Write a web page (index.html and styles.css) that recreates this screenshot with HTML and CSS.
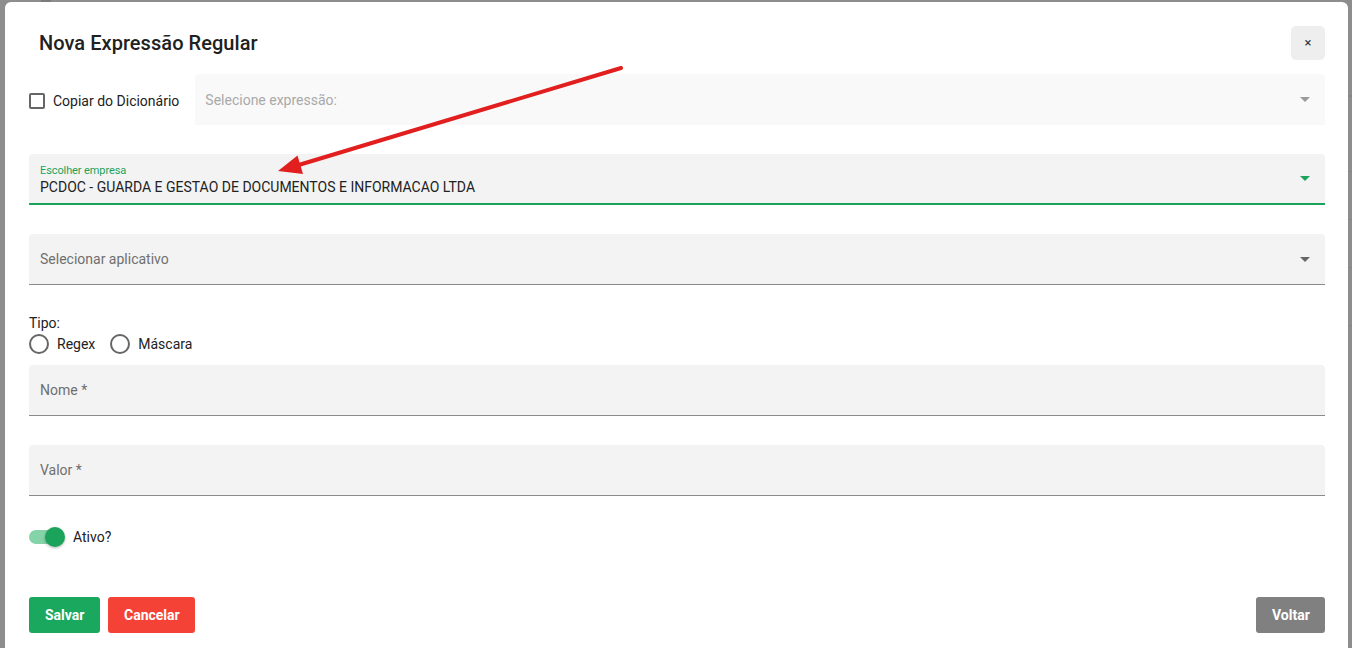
FILE: index.html
```html
<!DOCTYPE html>
<html lang="pt">
<head>
<meta charset="utf-8">
<title>Nova Expressão Regular</title>
<link rel="stylesheet" href="styles.css">
</head>
<body>
<div class="modal">
  <div class="modal-header">
    <h2 class="modal-title">Nova Expressão Regular</h2>
    <button class="close-btn" type="button">×</button>
  </div>

  <div class="row-copy">
    <label class="check">
      <span class="check-box"></span>
      <span class="check-label">Copiar do Dicionário</span>
    </label>
    <div class="field field-disabled">
      <span class="placeholder light">Selecione expressão:</span>
      <span class="caret caret-light"></span>
    </div>
  </div>

  <div class="field field-focused field-gap">
    <div class="field-stack">
      <span class="float-label">Escolher empresa</span>
      <span class="value">PCDOC - GUARDA E GESTAO DE DOCUMENTOS E INFORMACAO LTDA</span>
    </div>
    <span class="caret caret-green"></span>
  </div>

  <div class="field field-gap">
    <span class="placeholder">Selecionar aplicativo</span>
    <span class="caret"></span>
  </div>

  <div class="tipo">
    <div class="tipo-label">Tipo:</div>
    <div class="radios">
      <label class="radio"><span class="radio-circle"></span><span>Regex</span></label>
      <label class="radio"><span class="radio-circle"></span><span>Máscara</span></label>
    </div>
  </div>

  <div class="field field-nome">
    <span class="placeholder">Nome *</span>
  </div>

  <div class="field field-valor">
    <span class="placeholder">Valor *</span>
  </div>

  <div class="toggle-row">
    <span class="toggle"><span class="toggle-track"></span><span class="toggle-thumb"></span></span>
    <span class="toggle-label">Ativo?</span>
  </div>

  <div class="actions">
    <div class="actions-left">
      <button class="btn btn-green" type="button">Salvar</button>
      <button class="btn btn-red" type="button">Cancelar</button>
    </div>
    <button class="btn btn-gray" type="button">Voltar</button>
  </div>

  <svg class="annot-arrow" width="1352" height="648" viewBox="0 0 1352 648" aria-hidden="true">
    <line x1="621" y1="68" x2="292" y2="167" stroke="#e21f1f" stroke-width="4" stroke-linecap="round"/>
    <polygon points="278,171 297.5,155.5 303,174" fill="#e21f1f"/>
  </svg>
</div>
</body>
</html>
```

FILE: styles.css
```css
* { box-sizing: border-box; }

html, body {
  margin: 0;
  height: 100%;
}

body {
  background-color: #8d8d8d;
  background-image:
    linear-gradient(#7c7c7c, #7c7c7c),
    linear-gradient(#858585, #858585),
    linear-gradient(#858585, #858585),
    linear-gradient(#858585, #858585),
    linear-gradient(#858585, #858585),
    linear-gradient(#858585, #858585);
  background-repeat: no-repeat;
  background-size: 10px 2px, 6px 2px, 6px 1px, 6px 1px, 6px 1px, 6px 1px;
  background-position: 41px 0, 1348px 95px, 1348px 171px, 1348px 219px, 1348px 267px, 1348px 325px;
  font-family: Roboto, "Liberation Sans", Arial, sans-serif;
  color: #212121;
  overflow: hidden;
  padding: 2px 4px 0 5px;
}

.modal {
  position: relative;
  background: #fff;
  border-radius: 6px 6px 0 0;
  min-height: 660px;
  padding: 24px 23px 0 24px;
}

.modal-header {
  display: flex;
  align-items: center;
  justify-content: space-between;
  height: 34px;
}

.modal-title {
  margin: 0 0 0 10px;
  font-size: 20px;
  font-weight: 500;
  line-height: 28px;
  color: #212121;
  letter-spacing: 0.05px;
}

.close-btn {
  width: 34px;
  height: 34px;
  border: none;
  border-radius: 5px;
  background: #eeeeee;
  font-family: inherit;
  font-size: 13px;
  color: #333;
  padding: 0;
  line-height: 34px;
}

/* row 1 */
.row-copy {
  display: flex;
  align-items: center;
  gap: 16px;
  margin-top: 14px;
}

.check {
  display: flex;
  align-items: center;
  gap: 8px;
  flex: none;
  padding-top: 2px;
}

.check-box {
  width: 16px;
  height: 16px;
  border: 2px solid #666;
  border-radius: 2px;
}

.check-label {
  font-size: 14px;
  color: #222;
}

.field {
  height: 51px;
  flex: 1;
  display: flex;
  align-items: center;
  justify-content: space-between;
  padding: 0 15px 0 11px;
  background: #f3f3f3;
  border-radius: 4px 4px 0 0;
  border-bottom: 1px solid #8a8a8a;
}

.field-disabled {
  background: #f9f9f9;
  border-bottom: none;
  padding-left: 10px;
}

.field-gap { margin-top: 29px; }

.field-focused {
  border-bottom: 2px solid #1ba35c;
}

.field-stack {
  display: flex;
  flex-direction: column;
  padding-top: 2px;
}

.float-label {
  font-size: 11px;
  line-height: 14px;
  color: #1ba35c;
  letter-spacing: -0.1px;
}

.value {
  font-size: 14px;
  line-height: 18px;
  color: #222;
}

.placeholder {
  font-size: 14px;
  color: #6f6f6f;
}

.placeholder.light { color: #a9a9a9; }

.caret {
  width: 0;
  height: 0;
  border-left: 5px solid transparent;
  border-right: 5px solid transparent;
  border-top: 5px solid #666;
}

.caret-light { border-top-color: #9a9a9a; }
.caret-green { border-top-color: #1ba35c; }

/* tipo */
.tipo {
  margin-top: 29px;
}

.tipo-label {
  font-size: 14px;
  line-height: 18px;
  color: #222;
}

.radios {
  display: flex;
  gap: 15px;
  margin-top: 1px;
}

.radio {
  display: flex;
  align-items: center;
  gap: 8px;
  font-size: 14px;
  color: #222;
  height: 22px;
}

.radio-circle {
  width: 20px;
  height: 20px;
  border: 2px solid #666;
  border-radius: 50%;
}

.field-nome { margin-top: 10px; }
.field-valor { margin-top: 29px; }

/* toggle */
.toggle-row {
  display: flex;
  align-items: center;
  gap: 9px;
  margin-top: 31px;
  height: 20px;
}

.toggle {
  position: relative;
  width: 35px;
  height: 20px;
  display: flex;
  align-items: center;
}

.toggle-track {
  width: 34px;
  height: 14px;
  border-radius: 7px;
  background: #85d3a9;
}

.toggle-thumb {
  position: absolute;
  right: -1px;
  top: 0;
  width: 20px;
  height: 20px;
  border-radius: 50%;
  background: #1ba35c;
  box-shadow: 0 1px 3px rgba(0,0,0,0.3);
}

.toggle-label {
  font-size: 14px;
  color: #222;
}

/* actions */
.actions {
  display: flex;
  justify-content: space-between;
  align-items: center;
  margin-top: 50px;
}

.actions-left {
  display: flex;
  gap: 8px;
}

.btn {
  height: 36px;
  border: none;
  border-radius: 3px;
  padding: 0 16px;
  font-family: inherit;
  font-size: 14px;
  font-weight: 700;
  color: #fff;
}

.btn-green { background: #1aa85e; width: 71px; }
.btn-red { background: #f44336; width: 87px; }
.btn-gray { background: #808080; width: 69px; }

.annot-arrow {
  position: absolute;
  left: -5px;
  top: -2px;
  pointer-events: none;
}
```
